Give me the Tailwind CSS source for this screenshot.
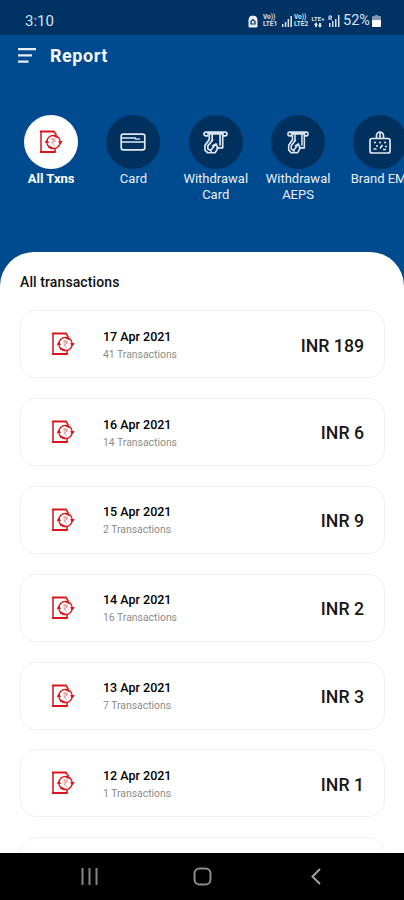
<!DOCTYPE html>
<html lang="en">
<head>
<meta charset="utf-8">
<title>Report</title>
<script src="https://cdn.jsdelivr.net/npm/@tailwindcss/browser@4"></script>
</head>
<body class="w-[404px] h-[900px] overflow-hidden bg-[#004b8f] font-['Roboto','Liberation_Sans',sans-serif]">
<svg class="hidden">
  <symbol id="txn" viewBox="0 0 24 24">
    <g fill="none" stroke="#d9161b" stroke-width="1.5">
      <path d="M15 1.500l2.500 3.700M2 1.500v20.700M16 22v-3"/>
      <path d="M1 1.500h14.500M1 22h15.700" stroke-width="1.800"/>
      <circle cx="14.500" cy="12" r="6.700" stroke-width="1.300"/>
      <path d="M14.500 5.300l4 1.800M9.500 16.500l4.500 2.200" stroke-width="2"/>
      <path d="M19.700 11.500h3.500l-2 2.600zM6.200 12.500h3.400l-1.700-2.600z" fill="#d9161b" stroke-width=".8"/>
      <path d="M12.300 9h4.700M12.300 11h4.700M12.800 9c3.500 0 3.500 3.900 0 3.900l2.800 3" stroke-width=".8" stroke="#e8777a"/>
    </g>
  </symbol>
  <symbol id="atm" viewBox="0 0 26 24" preserveAspectRatio="none">
    <g fill="none" stroke="#dce5ef" stroke-width="1.800" stroke-linejoin="round" stroke-linecap="round">
      <path d="M5 5H3a1.900 1.900 0 0 1 0-3.800h20a1.900 1.900 0 0 1 0 3.800h-2M5 3h16"/>
      <path d="M6.500 4v5L2 15v5l3 2.700h7.500L15.500 18M20.500 4v13.500h-6M17.700 4v10.500M9.500 4v5"/>
      <path d="M10 9.500L5 15.500v2.500M13.500 13.500l-5 6M10 15.500l3.500-2 2 4M5 18.500l3.500 2.500"/>
    </g>
  </symbol>
</svg>
<div class="flex h-full flex-col">
  <div class="flex h-[35px] shrink-0 items-center justify-between bg-[#003364] pt-[7px] pr-[23px] pl-[25px] text-[#d9e2ec]">
    <div class="text-[15px] leading-none">3:10</div>
    <div class="flex items-center">
      <svg class="mr-[5px] h-[13px] w-[10px]" viewBox="0 0 10 13"><path d="M1 4.500Q1 1 5 1t4 3.500V12H1z" fill="#e8eef4" stroke="#e8eef4" stroke-linejoin="round"/><path d="M3 6.500L5 4.500l2 2V9H3z" fill="none" stroke="#003364" stroke-width="1.200"/></svg>
      <div class="w-[19px] text-[6.500px] leading-[7px] font-bold"><div>Vo))</div><div>LTE1</div></div>
      <svg class="mr-[2px] h-[11px] w-[10px]" viewBox="0 0 10 11" fill="#d9e2ec"><path d="M0 8h1.500v3H0zM2.800 6h1.500v5H2.800zM5.600 3h1.500v8H5.600zM8.400 0H10v11H8.400z"/></svg>
      <div class="w-[16px] text-[6.500px] leading-[7px] font-bold"><div>Vo))</div><div>LTE2</div></div>
      <div class="flex w-[16px] flex-col items-center text-[6px] leading-[7px] font-bold"><div>LTE+</div><svg class="h-[6px] w-[8px]" viewBox="0 0 8 6" fill="#d9e2ec"><path d="M0 3l2-3 2 3H3v2H1V3zM4 3h1V1h2v2h1L6 6z"/></svg></div>
      <svg class="mx-[2px] h-[12px] w-[12px]" viewBox="0 0 12 12" fill="#d9e2ec"><path d="M1 8h1.500v4H1zM4 6h1.500v6H4zM7 4h1.500v8H7zM10 0h1.500v12H10z"/><path d="M1 5V1h2.500v2H1l3 2" fill="none" stroke="#d9e2ec"/></svg>
      <div class="ml-[1px] w-[29px] text-[14.500px] leading-none">52%</div>
      <svg class="h-[12px] w-[9px]" viewBox="0 0 9 12"><path d="M3 0h3v1h2q1 0 1 1v9q0 1-1 1H1q-1 0-1-1V2q0-1 1-1h2z" fill="#8296ad"/><path d="M0 5h9v6q0 1-1 1H1q-1 0-1-1z" fill="#fff"/></svg>
    </div>
  </div>

  <div class="flex h-[41px] shrink-0 items-center pl-[18px]">
    <svg class="h-[15px] w-[18px]" viewBox="0 0 18 15" fill="#e6edf4"><path d="M0 0h18v2.300H0zM0 6.300h14v2.300H0zM0 12.500h10.500v2.300H0z"/></svg>
    <h1 class="ml-[14px] text-[18px] leading-none font-bold tracking-[0.550px] text-[#f5f8fb]">Report</h1>
  </div>

  <div class="flex h-[176px] shrink-0 overflow-hidden pt-[39px] pl-[10px] text-center text-[13px] leading-[15.500px] text-[#e9eff5]">
    <div class="flex w-[82.300px] shrink-0 flex-col items-center">
      <div class="flex size-[54px] items-center justify-center rounded-full bg-white"><svg class="size-[24px]"><use href="#txn"/></svg></div>
      <div class="mt-[2px] font-bold text-white">All Txns</div>
    </div>
    <div class="flex w-[82.300px] shrink-0 flex-col items-center">
      <div class="flex size-[54px] items-center justify-center rounded-full bg-[#00305e]"><svg class="h-[18px] w-[26px]" viewBox="0 0 26 18" fill="none" stroke="#dfe7ef" stroke-width="1.700"><rect x="1.200" y="1.200" width="23.600" height="15.600" rx="2"/><path d="M1 5h15M1 9h24"/><path d="M15 6h5" stroke-width="1.400"/></svg></div>
      <div class="mt-[2px]">Card</div>
    </div>
    <div class="flex w-[82.300px] shrink-0 flex-col items-center">
      <div class="flex size-[54px] items-center justify-center rounded-full bg-[#00305e]"><svg class="h-[23px] w-[25px]"><use href="#atm"/></svg></div>
      <div class="mt-[2px]">Withdrawal<br>Card</div>
    </div>
    <div class="flex w-[82.300px] shrink-0 flex-col items-center">
      <div class="flex size-[54px] items-center justify-center rounded-full bg-[#00305e]"><svg class="h-[23px] w-[22px]"><use href="#atm"/></svg></div>
      <div class="mt-[2px]">Withdrawal<br>AEPS</div>
    </div>
    <div class="flex w-[82.300px] shrink-0 flex-col items-center">
      <div class="flex size-[54px] items-center justify-center rounded-full bg-[#00305e]"><svg class="h-[23px] w-[22px]" viewBox="0 0 22 23" fill="none" stroke="#dfe7ef" stroke-width="1.700"><rect x="1" y="7.500" width="20" height="14.500" rx="2"/><path d="M7.500 7V4.500a3.500 3.500 0 0 1 7 0V7M11 1v6"/><path d="M5 11.500h2M10 11.500h2M15 11.500h2M7 15h2M13.500 14L11 17.500M16 15.500h2M4.500 18h3M14 18.500h3"/></svg></div>
      <div class="mt-[2px] whitespace-nowrap">Brand EMI</div>
    </div>
  </div>

  <main class="flex h-[601px] shrink-0 flex-col overflow-hidden rounded-t-[34px] bg-white pr-[19px] pl-[20px] pt-[22px]">
    <h2 class="text-[14px] leading-[16px] font-medium tracking-[0.100px] text-[#111]">All transactions</h2>
    <div id="list" class="mt-[20.400px] flex flex-col gap-[19.800px]"></div>
  </main>

  <nav class="flex h-[47px] shrink-0 items-center bg-black pl-[81px]">
    <svg class="h-[17px] w-[17px]" viewBox="0 0 17 17" stroke="#858585" stroke-width="2"><path d="M1.500 0v17M8.500 0v17M15.500 0v17"/></svg>
    <svg class="ml-[95px] size-[19px]" viewBox="0 0 19 19" fill="none" stroke="#8c8c8c" stroke-width="2"><rect x="1.500" y="1.500" width="16" height="16" rx="5"/></svg>
    <svg class="ml-[99px] h-[17px] w-[10px]" viewBox="0 0 10 17" fill="none" stroke="#a0a0a0" stroke-width="2"><path d="M9 1L1.500 8.500 9 16"/></svg>
  </nav>
</div>
<script>
const rows = [["17", "41", "189"], ["16", "14", "6"], ["15", "2", "9"], ["14", "16", "2"], ["13", "7", "3"], ["12", "1", "1"]];
document.getElementById("list").innerHTML = rows.map(([day, count, amount]) => `
  <article class="flex h-[68px] shrink-0 items-center rounded-[16px] border-[1.500px] border-[#f1f1f1] bg-white pr-[20px] pl-[30px]">
    <svg class="size-[24px]"><use href="#txn"/></svg>
    <div class="ml-[28px] flex-1 pt-[2px]">
      <div class="text-[12.500px] leading-[17px] font-medium text-black">${day} Apr 2021</div>
      <div class="mt-[2px] text-[10.400px] leading-[16px] text-[#8b8b8b]">${count} Transactions</div>
    </div>
    <div class="pt-[4px] text-[17.700px] leading-none font-medium text-[#171717]">INR ${amount}</div>
  </article>`).join("") + `<article class="h-[68px] shrink-0 rounded-[16px] border-[1.500px] border-[#f1f1f1] bg-white"></article>`;
</script>
</body>
</html>
